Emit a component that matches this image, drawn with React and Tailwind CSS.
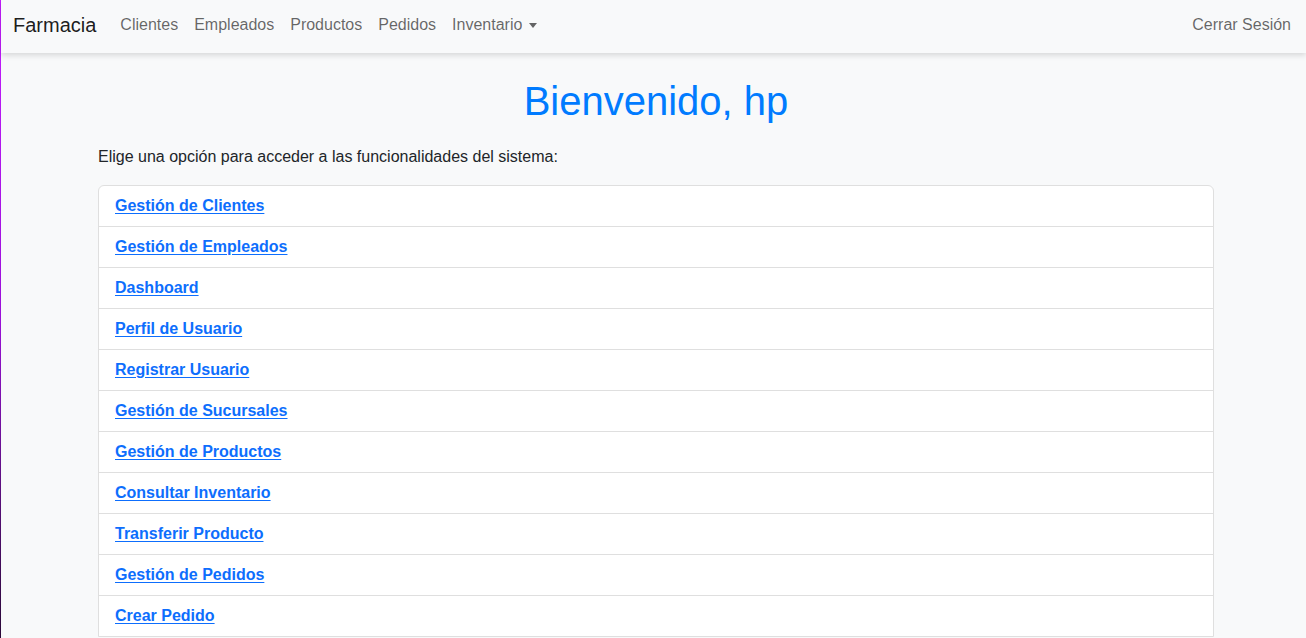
import React from "react";

const items = [
  "Gestión de Clientes",
  "Gestión de Empleados",
  "Dashboard",
  "Perfil de Usuario",
  "Registrar Usuario",
  "Gestión de Sucursales",
  "Gestión de Productos",
  "Consultar Inventario",
  "Transferir Producto",
  "Gestión de Pedidos",
  "Crear Pedido",
];

export default function App() {
  return (
    <div
      className="flex h-[638px] w-full overflow-hidden bg-[#f8f9fa] text-[#212529]"
      style={{ fontFamily: '"Liberation Sans", Arial, sans-serif' }}
    >
      <div className="w-px flex-none bg-gradient-to-b from-[#c41cff] via-[#9a10d8] to-[#2a0838]" />
      <div className="flex-1 min-w-0">
        <nav className="relative z-10 flex h-[53px] items-center bg-[#f8f9fa] pb-[4px] pl-[12px] pr-[7px] shadow-[0_2px_6px_rgba(0,0,0,0.15)]">
          <span className="mr-4 text-[20px] leading-[30px] text-[rgba(0,0,0,0.9)]">Farmacia</span>
          <div className="flex items-center text-[16px] leading-6 text-[rgba(0,0,0,0.6)]">
            <a className="px-2">Clientes</a>
            <a className="px-2">Empleados</a>
            <a className="px-2">Productos</a>
            <a className="px-2">Pedidos</a>
            <a className="flex items-center px-2">
              Inventario
              <span className="ml-[7px] mt-[1px] inline-block h-0 w-0 border-x-[4.5px] border-t-[5px] border-b-0 border-x-transparent border-t-[rgba(0,0,0,0.6)]" />
            </a>
          </div>
          <a className="ml-auto px-2 text-[16px] leading-6 text-[rgba(0,0,0,0.6)]">Cerrar Sesión</a>
        </nav>

        <main className="ml-[97px] w-[1116px]">
          <h1 className="mt-[24px] mb-[20px] text-center text-[40px] leading-[48px] font-normal text-[#007bff]">
            Bienvenido, hp
          </h1>
          <p className="mb-4 text-[16px] leading-6 text-[#212529]">
            Elige una opción para acceder a las funcionalidades del sistema:
          </p>
          <ul className="rounded-t-[6px] border border-[#dfdfdf] bg-white">
            {items.map((t, i) => (
              <li
                key={t}
                className={
                  "px-4 py-2 text-[16px] leading-6 " +
                  (i > 0 ? "border-t border-[#dfdfdf]" : "")
                }
              >
                <a className="font-bold text-[#0d6efd] underline underline-offset-[2px]">{t}</a>
              </li>
            ))}
          </ul>
        </main>
      </div>
    </div>
  );
}
